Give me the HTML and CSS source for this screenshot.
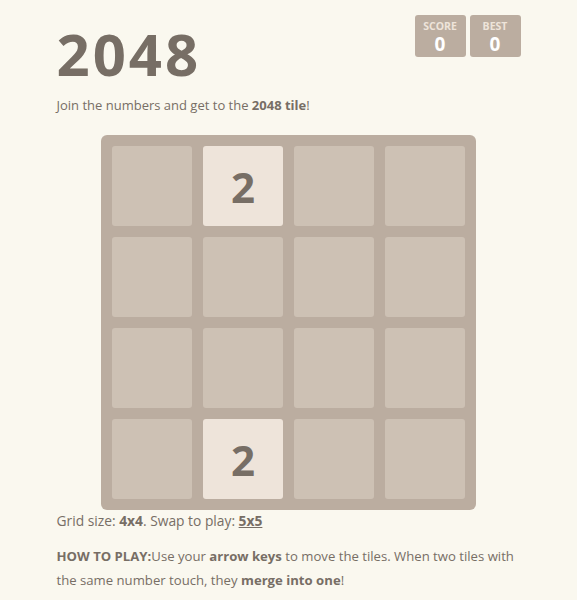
FILE: index.html
```html
<!DOCTYPE html>
<html>
<head>
<meta charset="utf-8">
<link rel="stylesheet" href="styles.css">
</head>
<body>
<div class="container">
  <div class="header">
    <h1 class="title">2048</h1>
    <div class="scores">
      <div class="score-box"><div class="score-label">SCORE</div><div class="score-value">0</div></div>
      <div class="score-box"><div class="score-label">BEST</div><div class="score-value">0</div></div>
    </div>
  </div>
  <p class="intro">Join the numbers and get to the <strong>2048 tile</strong>!</p>
  <div class="board">
    <div class="tile"></div><div class="tile t2">2</div><div class="tile"></div><div class="tile"></div>
    <div class="tile"></div><div class="tile"></div><div class="tile"></div><div class="tile"></div>
    <div class="tile"></div><div class="tile"></div><div class="tile"></div><div class="tile"></div>
    <div class="tile"></div><div class="tile t2">2</div><div class="tile"></div><div class="tile"></div>
  </div>
  <p class="grid-size">Grid size: <strong>4x4</strong>. Swap to play: <a class="swap" href="#">5x5</a></p>
  <p class="howto"><strong>HOW TO PLAY:</strong>Use your <strong>arrow keys</strong> to move the tiles. When two tiles with the same number touch, they <strong>merge into one</strong>!</p>
</div>
</body>
</html>
```
FILE: styles.css
```css
html, body {
  margin: 0;
  padding: 0;
  background: #faf8ef;
}
body {
  font-family: "Open Sans", "Noto Sans", sans-serif;
  color: #776e65;
  font-size: 13px;
}
.container {
  width: 464px;
  margin: 0 auto;
}
.header {
  display: flex;
  justify-content: space-between;
  align-items: flex-start;
}
.title {
  margin: 14px 0 0 0;
  font-size: 58px;
  font-weight: 700;
  line-height: 80px;
  color: #776e65;
  letter-spacing: 3px;
}
.scores {
  display: flex;
  gap: 4px;
  margin-top: 15px;
}
.score-box {
  width: 51px;
  height: 42px;
  background: #bbada0;
  border-radius: 3px;
  text-align: center;
  box-sizing: border-box;
  padding-top: 4px;
}
.score-label {
  font-size: 10.5px;
  font-weight: 700;
  color: #eee4da;
  line-height: 15px;
}
.score-value {
  font-size: 19px;
  font-weight: 700;
  color: #ffffff;
  line-height: 20px;
}
.intro {
  margin: 2px 0 0 0;
  line-height: 18px;
  font-size: 13px;
}
.intro strong, .grid-size strong, .howto strong {
  font-weight: 700;
}
.board {
  width: 375px;
  margin: 21px auto 0 auto;
  background: #bbada0;
  border-radius: 6px;
  padding: 11px;
  box-sizing: border-box;
  display: grid;
  grid-template-columns: repeat(4, 80px);
  grid-auto-rows: 80px;
  gap: 11px;
}
.tile {
  background: #cdc1b4;
  border-radius: 3px;
  display: flex;
  align-items: center;
  justify-content: center;
  font-size: 42px;
  font-weight: 700;
  color: #776e65;
}
.t2 {
  background: #eee4da;
}
.grid-size {
  margin: 0;
  line-height: 22px;
  font-size: 13.8px;
}
.swap {
  color: #776e65;
  font-weight: 700;
  text-decoration: underline;
}
.howto {
  margin: 12px 0 0 0;
  line-height: 24px;
  font-size: 13.15px;
}
```
